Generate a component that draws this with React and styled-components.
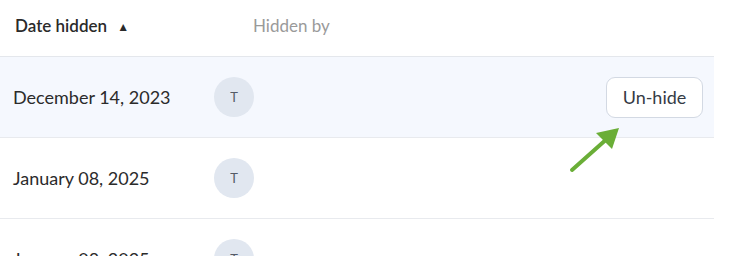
import React from "react";
import styled, { createGlobalStyle } from "styled-components";

const GlobalStyle = createGlobalStyle`
  html, body {
    margin: 0;
    padding: 0;
    background: #ffffff;
    font-family: Lato, "Open Sans", sans-serif;
    overflow: hidden;
  }
`;

const rows = [
  { date: "December 14, 2023", by: "T", active: true },
  { date: "January 08, 2025", by: "T" },
  { date: "January 08, 2025", by: "T" },
];

const App = () => {
  return (
    <Page>
      <GlobalStyle />
      <Table>
        <HeaderRow>
          <HeadCell>
            Date hidden <SortMark>▲</SortMark>
          </HeadCell>
          <HeadCell muted>Hidden by</HeadCell>
        </HeaderRow>
        {rows.map((row, i) => (
          <Row key={i} active={row.active}>
            <DateCell>{row.date}</DateCell>
            <ByCell>
              <Avatar>{row.by}</Avatar>
            </ByCell>
            <ActionCell>{row.active && <UnhideBtn>Un-hide</UnhideBtn>}</ActionCell>
          </Row>
        ))}
      </Table>
      <Pointer width="60" height="56" viewBox="0 0 60 56">
        <line x1="3" y1="52" x2="40" y2="19" stroke="#6aae37" strokeWidth="4" strokeLinecap="round" />
        <polygon points="50,10 27,15 43,31" fill="#6aae37" />
      </Pointer>
    </Page>
  );
};

export default App;

const Page = styled.div`
  position: relative;
  width: 732px;
  height: 256px;
  overflow: hidden;
`;

const Table = styled.div`
  width: 714px;
  display: flex;
  flex-direction: column;
`;

const HeaderRow = styled.div`
  display: grid;
  grid-template-columns: 253px 1fr;
  align-items: center;
  border-bottom: 1px solid #e4e7ec;
  padding-left: 15px;
  box-sizing: border-box;
  height: 57px;
`;

const HeadCell = styled.div`
  font-size: 17px;
  font-weight: ${(p) => (p.muted ? 400 : 600)};
  color: ${(p) => (p.muted ? "#9a9a9a" : "#2a2a2a")};
  margin-top: -6px;
  margin-left: ${(p) => (p.muted ? "-15px" : "0")};
`;

const SortMark = styled.span`
  font-size: 12px;
  margin-left: 6px;
  position: relative;
  top: -1px;
`;

const Row = styled.div`
  display: grid;
  grid-template-columns: 201px 1fr auto;
  align-items: center;
  height: 81px;
  box-sizing: border-box;
  border-bottom: 1px solid #e8eaee;
  background: ${(p) => (p.active ? "#f5f8fe" : "#ffffff")};
  padding: 0 11px 0 13px;
`;

const DateCell = styled.div`
  font-size: 18px;
  color: #2b2b2b;
`;

const ByCell = styled.div`
  display: flex;
  align-items: center;
`;

const Avatar = styled.div`
  width: 40px;
  height: 40px;
  border-radius: 50%;
  background: #e1e7f0;
  color: #555b66;
  font-size: 13px;
  display: flex;
  align-items: center;
  justify-content: center;
`;

const ActionCell = styled.div`
  display: flex;
  align-items: center;
`;

const UnhideBtn = styled.button`
  width: 97px;
  height: 41px;
  border: 1px solid #d3d9e3;
  border-radius: 9px;
  background: #ffffff;
  font-family: Lato, "Open Sans", sans-serif;
  font-size: 18px;
  color: #353b45;
  cursor: pointer;
`;

const Pointer = styled.svg`
  position: absolute;
  left: 569px;
  top: 118px;
`;
